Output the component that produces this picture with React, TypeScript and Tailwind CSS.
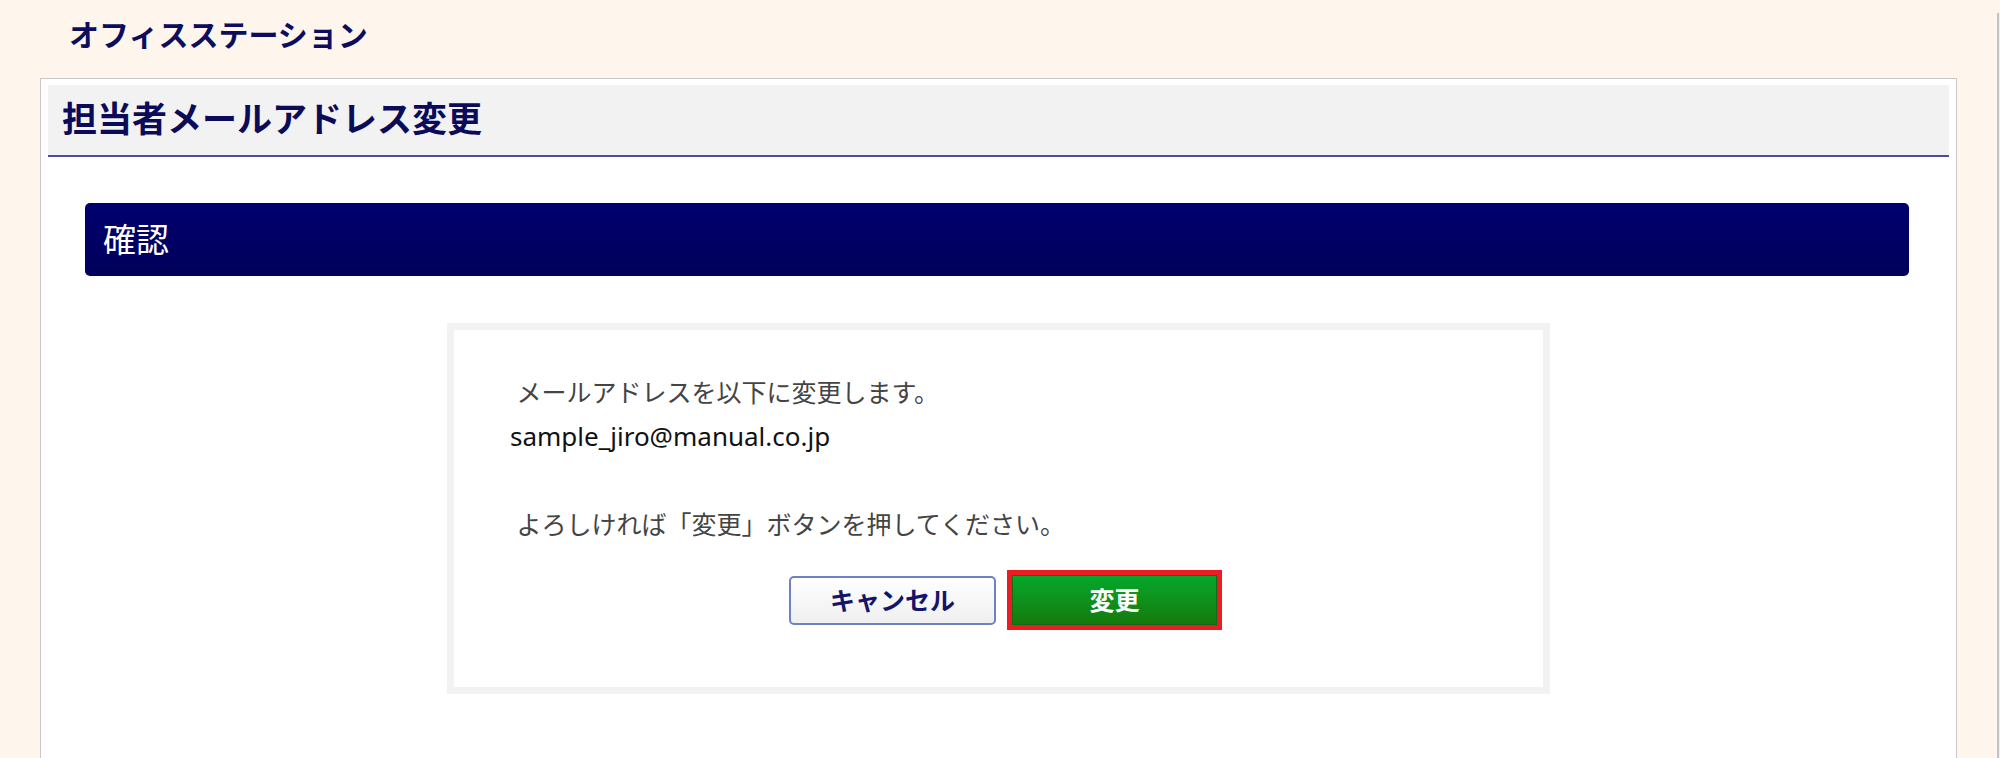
import React from "react";

const jp = { fontFamily: '"Noto Sans CJK JP", "Noto Sans", sans-serif' };
const mixed = { fontFamily: '"Noto Sans", "Noto Sans CJK JP", sans-serif' };

export default function App() {
  return (
    <div className="flex h-[758px] w-full overflow-hidden bg-[#fef6ec]" style={jp}>
      <div className="flex min-w-0 flex-1 flex-col">
        <div className="pl-[69px] pt-[14px] text-[30px] font-bold leading-[38px] text-[#0d0d5e]">
          オフィスステーション
        </div>
        <div className="mx-[40px] mt-[26px] flex-1 border border-b-0 border-[#c8c8c8] bg-white px-[7px] pt-[6px]">
          <div className="flex h-[72px] items-center border-b-2 border-[#4d4d9f] bg-[#f2f2f2] pb-[6px] pl-[14px]">
            <h1 className="text-[35px] font-bold leading-[44px] text-[#0b0b5a]">担当者メールアドレス変更</h1>
          </div>

          <div className="ml-[37px] mr-[40px] mt-[46px] flex h-[73px] items-center rounded-[5px] bg-gradient-to-b from-[#000070] to-[#00005a] pb-[4px] pl-[18px]">
            <h2 className="text-[33px] font-normal leading-[42px] text-white">確認</h2>
          </div>

          <div className="mx-auto mt-[47px] w-[1103px] border-[7px] border-[#f2f2f2] bg-white">
            <div className="pl-[56px] pt-[40px] text-[25px] leading-[44px]">
              <p className="whitespace-pre text-[#444444]" style={mixed}>
                {" メールアドレスを以下に変更します。"}
              </p>
              <p className="text-[26px] text-[#111111]" style={mixed}>
                sample_jiro@manual.co.jp
              </p>
              <p className="h-[44px]"></p>
              <p className="whitespace-pre text-[#444444]" style={mixed}>
                {" よろしければ「変更」ボタンを押してください。"}
              </p>
            </div>
            <div className="mt-[24px] flex items-center justify-center pb-[57px] pl-[14px]">
              <button className="flex h-[49px] w-[207px] items-center justify-center rounded-[5px] border-2 border-[#7080c4] bg-gradient-to-b from-white to-[#efefef] text-[25px] font-bold text-[#14146a]">
                キャンセル
              </button>
              <div className="ml-[11px] border-[5px] border-[#ed1c24]">
                <button className="flex h-[50px] w-[205px] items-center justify-center border border-[#0d6e14] bg-gradient-to-b from-[#04a82b] to-[#137a0b] text-[25px] font-bold text-white">
                  変更
                </button>
              </div>
            </div>
          </div>
        </div>
      </div>
      <div className="mt-[13px] w-[3px] border-l-2 border-[#c4c4c4] bg-[#efefef]" />
    </div>
  );
}
